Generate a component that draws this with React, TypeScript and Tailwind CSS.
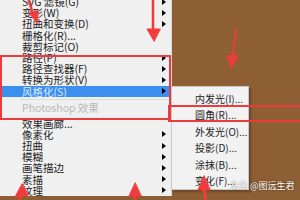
import React from "react";

const font = { fontFamily: '"Noto Sans CJK SC", "Liberation Sans", sans-serif' };

type Item = { label: string; sub?: boolean; active?: boolean };

const topItems: Item[] = [
  { label: "SVG 滤镜(G)", sub: true },
  { label: "变形(W)", sub: true },
  { label: "扭曲和变换(D)", sub: true },
  { label: "栅格化(R)..." },
  { label: "裁剪标记(O)" },
  { label: "路径(P)", sub: true },
  { label: "路径查找器(F)", sub: true },
  { label: "转换为形状(V)", sub: true },
  { label: "风格化(S)", sub: true, active: true },
];

const psItems: Item[] = [
  { label: "效果画廊..." },
  { label: "像素化", sub: true },
  { label: "扭曲", sub: true },
  { label: "模糊", sub: true },
  { label: "画笔描边", sub: true },
  { label: "素描", sub: true },
  { label: "纹理", sub: true },
];

const subItems = ["内发光(I)...", "圆角(R)...", "外发光(O)...", "投影(D)...", "涂抹(B)...", "变化(F)..."];

function Arrow() {
  return <span className="w-0 h-0 border-y-[3px] border-y-transparent border-l-[4px] border-l-black" />;
}

function Row({ item }: { item: Item }) {
  return (
    <div
      className={`h-[11.75px] flex items-center justify-between pl-[22px] pr-[5px] text-[10.5px] leading-[11px] whitespace-nowrap ${
        item.active ? "bg-[#3d8fef] text-[#dbeaff]" : "text-[#222]"
      }`}
    >
      <span>{item.label}</span>
      {item.sub && <Arrow />}
    </div>
  );
}

export default function App() {
  return (
    <div className="relative w-[300px] h-[200px] overflow-hidden bg-[#8e5e34] flex" style={font}>
      {/* main menu */}
      <div className="w-[172px] h-full bg-[#f0f0f0] flex flex-col -mt-[4px] border-r border-[#d8d8d8]">
        {topItems.map((it) => (
          <Row key={it.label} item={it} />
        ))}
        <div className="h-[5px] flex items-center pl-[20px] pr-[2px]">
          <div className="h-px w-full bg-[#dcdcdc]" />
        </div>
        <div className="h-[12px] flex items-center pl-[22px] text-[10.5px] leading-[11px] text-[#b8b8b8]">
          Photoshop 效果
        </div>
        <div className="h-[5px]" />
        {psItems.map((it) => (
          <Row key={it.label} item={it} />
        ))}
      </div>

      {/* submenu */}
      <div className="absolute left-[171px] top-[86px] w-[78px] h-[104px] bg-[#f2f2f2] border border-[#c8c8c8] shadow-[2px_2px_2px_rgba(0,0,0,0.25)] flex flex-col pt-[3px]">
        {subItems.map((s) => (
          <div key={s} className="h-[16.5px] flex items-center pl-[23px] text-[10px] leading-[11px] whitespace-nowrap text-[#222]">
            {s}
          </div>
        ))}
      </div>

      {/* annotations */}
      <div className="absolute left-0 top-[55px] w-[171px] h-[65px] border-2 border-[#ec3a3f]" />
      <div className="absolute left-[168px] top-[105px] w-[134px] h-[17px] border-2 border-[#ec3a3f]" />

      <svg className="absolute inset-0 pointer-events-none" width="300" height="200" viewBox="0 0 300 200">
        <g fill="#f23b3b" stroke="#f23b3b" strokeLinecap="round">
          <line x1="28" y1="-2" x2="33" y2="14" strokeWidth="2.5" />
          <polygon points="37,23 29,13 38,11" />
          <line x1="153" y1="-2" x2="153" y2="30" strokeWidth="2.5" />
          <polygon points="154,41 147,29 160,29" />
          <line x1="236" y1="30" x2="233" y2="56" strokeWidth="2.5" opacity="0.8" />
          <polygon points="231,68 227,55 238,56" opacity="0.9" />
          <polygon points="22,184 15,197 28,195" />
          <line x1="21" y1="195" x2="19" y2="202" strokeWidth="3" />
          <polygon points="135,183 129,196 141,196" />
          <line x1="135" y1="195" x2="135" y2="202" strokeWidth="3" />
          <polygon points="204,176 198,190 210,190" />
          <line x1="204" y1="189" x2="206" y2="202" strokeWidth="3" />
        </g>
      </svg>

      <div className="absolute left-[230px] top-[181px] text-[9px] leading-none text-white whitespace-nowrap [text-shadow:0_0_2px_rgba(0,0,0,0.6)]">
        头条 @图远生君
      </div>
    </div>
  );
}
